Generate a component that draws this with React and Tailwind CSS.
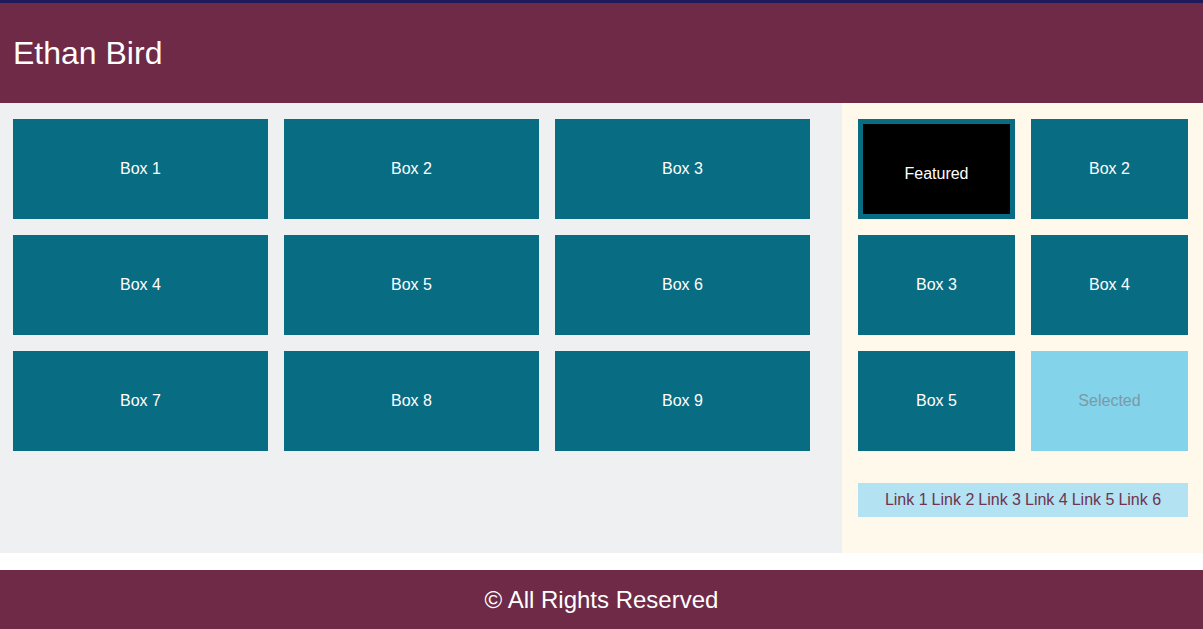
const Box = ({ label }) => (
  <div className="h-[100px] bg-[#086c82] flex items-center justify-center text-white text-base">
    {label}
  </div>
);

export default function App() {
  const left = ["Box 1", "Box 2", "Box 3", "Box 4", "Box 5", "Box 6", "Box 7", "Box 8", "Box 9"];
  const links = ["Link 1", "Link 2", "Link 3", "Link 4", "Link 5", "Link 6"];

  return (
    <div className="w-[1203px] h-[629px] overflow-hidden bg-white font-['Liberation_Sans',Arial,sans-serif]">
      <div className="h-[3px] bg-[#1e1b5c]"></div>
      <header className="h-[100px] bg-[#6e2a47] flex items-center px-[13px]">
        <h1 className="text-[32px] text-white leading-none">Ethan Bird</h1>
      </header>

      <main className="flex h-[450px]">
        <section className="w-[842px] bg-[#eff0f2] pl-[13px] pr-[32px] pt-4">
          <div className="grid grid-cols-3 gap-4">
            {left.map((b) => (
              <Box key={b} label={b} />
            ))}
          </div>
        </section>

        <aside className="flex-1 bg-[#fff9eb] pl-4 pr-[15px] pt-4">
          <div className="grid grid-cols-2 gap-4">
            <div className="h-[100px] bg-[#086c82] p-[5px]">
              <div className="h-full bg-black flex items-center justify-center pt-[10px] text-white text-base">
                Featured
              </div>
            </div>
            <Box label="Box 2" />
            <Box label="Box 3" />
            <Box label="Box 4" />
            <Box label="Box 5" />
            <div className="h-[100px] bg-[#83d3eb] flex items-center justify-center text-[#7a9aa6] text-base">
              Selected
            </div>
          </div>

          <nav className="mt-8 h-[34px] bg-[#b3e2f2] flex items-center justify-center gap-[4px] text-base text-[#6e3450]">
            {links.map((l) => (
              <a key={l} href="#">
                {l}
              </a>
            ))}
          </nav>
        </aside>
      </main>

      <footer className="mt-[17px] bg-[#6e2a47] py-[18px] text-center text-white text-[24px] leading-6">
        © All Rights Reserved
      </footer>
    </div>
  );
}
